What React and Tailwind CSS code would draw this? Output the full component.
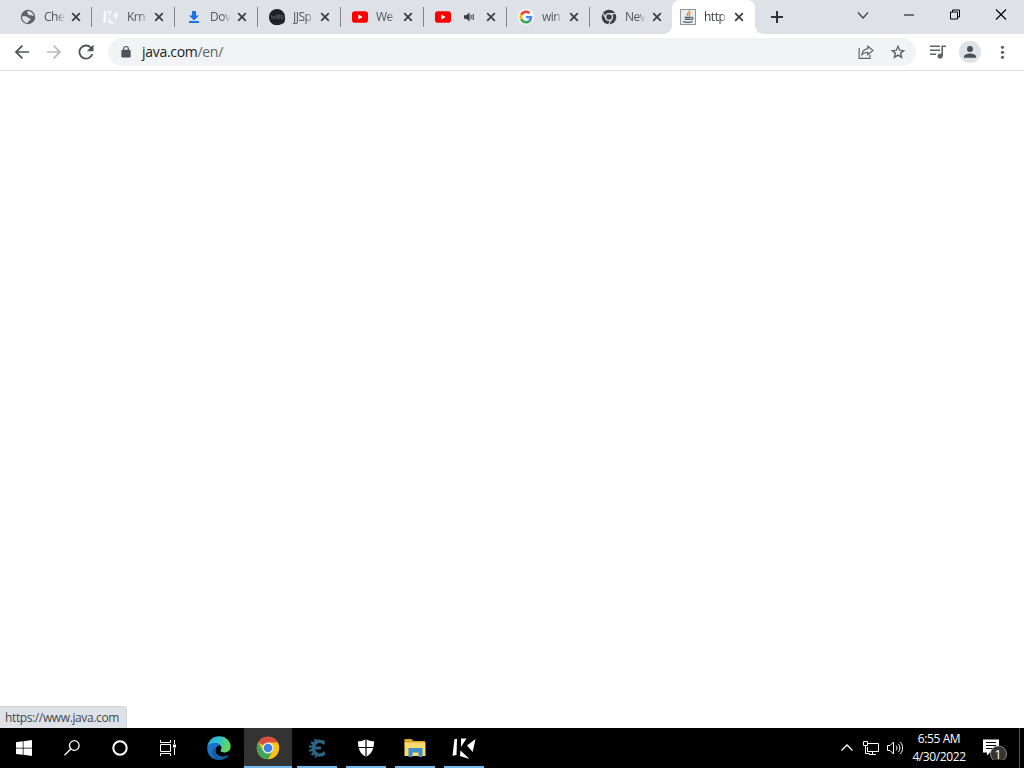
import React from 'react';

const tabs = [
  { icon: 'globe', title: 'Che' },
  { icon: 'krnl', title: 'Krn' },
  { icon: 'download', title: 'Dov' },
  { icon: 'jjs', title: 'JJSp' },
  { icon: 'youtube', title: 'We' },
  { icon: 'youtube', title: '', audio: true },
  { icon: 'google', title: 'win' },
  { icon: 'chromeDark', title: 'Nev' },
  { icon: 'java', title: 'http', active: true },
];

function YouTube() {
  return (
    <svg className="size-4" viewBox="0 0 16 16">
      <rect x="0" y="2.3" width="16" height="11.4" rx="2.8" fill="#f00" />
      <path d="M6.4 5.6v4.8l4.2-2.4z" fill="#fff" />
    </svg>
  );
}

function Favicon({ name }) {
  if (name === 'youtube') return <YouTube />;
  if (name === 'globe') {
    return (
      <svg className="size-4" viewBox="0 0 16 16">
        <circle cx="8" cy="8" r="7.2" fill="#5f6368" />
        <path d="M2 7.500c3-.3 5-.2 5.800 1 .7 1 2.700.3 2.700 1.700s-2 1.300-2.300 2.300c-.2.700 0 1.300-.5 1.400C4.500 13.900 2 11 2 7.500z M7.500 2.300c-.8 1-.3 1.700.6 1.900-.3 1.200.5 2.200 2 2 1.300-.2 2.200.800 3.700.5C13.400 4.500 11 1.800 7.500 2.300z" fill="#dee1e6" />
      </svg>
    );
  }
  if (name === 'krnl') {
    return (
      <svg className="size-4" viewBox="0 0 24 24" fill="#f8f9fa">
        <path d="M1.500 3.500H5L4.500 20l-4.200.5zM8.500 2.500H14L8.500 11zM15 9.500L23 3l-2.500 13zM8 14l10 9-10-2z" />
      </svg>
    );
  }
  if (name === 'download') {
    return (
      <svg className="size-4" viewBox="0 0 16 16" fill="#1a73e8">
        <path d="M6 2h4v4.500h3L8 11.500 3 6.500h3zM3 12h10v2H3z" />
      </svg>
    );
  }
  if (name === 'jjs') {
    return (
      <svg className="size-4" viewBox="0 0 16 16">
        <path d="M0 8a8 8 0 1 1 16 0v3l-1 3-3 1.200A8 8 0 0 1 0 8z" fill="#202124" />
        <path d="M2 6l1.500 4L5 7l1.500 3L7 6M8.500 10V6h2v2h-2l2.500 2M12 6v4l2-1V7z" fill="none" stroke="#5c6064" strokeWidth=".8" />
      </svg>
    );
  }
  if (name === 'google') {
    return (
      <svg className="size-4" viewBox="0 0 48 48">
        <circle cx="24" cy="24" r="24" fill="#f5f6f8" />
        <g transform="translate(4.500 4.500) scale(.81)">
          <path fill="#EA4335" d="M24 9.500c3.540 0 6.710 1.220 9.210 3.600l6.850-6.850C35.900 2.380 30.470 0 24 0 14.620 0 6.510 5.380 2.560 13.220l7.980 6.190C12.430 13.720 17.740 9.500 24 9.500z" />
          <path fill="#4285F4" d="M46.980 24.550c0-1.570-.15-3.090-.38-4.550H24v9.020h12.940c-.58 2.960-2.260 5.480-4.780 7.180l7.730 6c4.510-4.180 7.090-10.360 7.090-17.650z" />
          <path fill="#FBBC05" d="M10.530 28.590A14.500 14.500 0 0 1 10.530 19.410l-7.980-6.190a24 24 0 0 0 0 21.560z" />
          <path fill="#34A853" d="M24 48c6.480 0 11.930-2.130 15.890-5.810l-7.730-6c-2.150 1.450-4.920 2.300-8.160 2.300-6.260 0-11.570-4.220-13.470-9.910l-7.980 6.190C6.510 42.620 14.620 48 24 48z" />
        </g>
      </svg>
    );
  }
  if (name === 'chromeDark') {
    return (
      <svg className="size-4" viewBox="0 0 16 16">
        <circle cx="8" cy="8" r="7.300" fill="#3c4043" />
        <circle cx="8" cy="8" r="3.400" fill="none" stroke="#dee1e6" strokeWidth="1.300" />
        <path d="M8 4.600h6.400M5.100 9.700L1.900 4.200M10.900 9.700l-3.200 5.500" stroke="#dee1e6" strokeWidth="1.200" />
      </svg>
    );
  }
  return (
    <svg className="size-4" viewBox="0 0 16 16">
      <rect x=".5" y=".5" width="15" height="15" fill="#e8ecec" stroke="#8d9899" />
      <path d="M9.500 1.500c.5 2-3.500 2.800-2 5.300M10.800 4c-2.500 1-.8 2-2 3.300" fill="none" stroke="#e07b1c" strokeWidth="1.200" />
      <path d="M4.500 8.500h6.500M5 10.300h5.500M3 12.500c2 1.200 7.500 1.200 9.500 0M11.500 8.200c2 0 1.500 2-.5 2.500" fill="none" stroke="#4b6270" strokeWidth="1.300" />
    </svg>
  );
}

function Close() {
  return (
    <svg className="size-4 shrink-0" viewBox="0 0 16 16" stroke="#3c4043" strokeWidth="1.800">
      <path d="M4.200 4.200l7.600 7.600M11.800 4.200l-7.600 7.600" />
    </svg>
  );
}

function Tab({ icon, title, audio, active }) {
  return (
    <div className={active ? 'relative flex h-[34px] w-[83px] items-center rounded-t-lg bg-white pl-2' : 'relative flex h-[34px] w-[83px] items-center pl-3'}>
      <div className="size-4 shrink-0"><Favicon name={icon} /></div>
      <div className={active
        ? 'ml-2 flex h-4 w-[23px] shrink-0 items-center whitespace-nowrap text-xs tracking-[-0.5px] text-[#3c4043] mask-r-from-75% mask-r-to-100%'
        : 'ml-2 flex h-4 w-5 shrink-0 items-center whitespace-nowrap text-xs tracking-[-0.5px] text-[#54585d] mask-r-from-65% mask-r-to-105%'}
      >
        {title}
      </div>
      {audio && (
        <svg className="absolute left-[41px] top-[11px] size-3" viewBox="0 0 12 12">
          <path d="M0 4.200h2.200L5.500 1.500v9L2.200 7.800H0z" fill="#3c4043" />
          <path d="M7 3.800v4.400M9.200 3v6" fill="none" stroke="#3c4043" strokeWidth="1.100" />
        </svg>
      )}
      <div className="ml-1"><Close /></div>
      {active ? (
        <>
          <span className="absolute -left-2 bottom-0 size-2 bg-[radial-gradient(circle_at_0_0,transparent_7.500px,#fff_8px)]" />
          <span className="absolute -right-2 bottom-0 size-2 bg-[radial-gradient(circle_at_100%_0,transparent_7.500px,#fff_8px)]" />
        </>
      ) : (
        icon !== 'chromeDark' && <span className="absolute -right-px top-[7px] h-5 w-px bg-[#80868b]" />
      )}
    </div>
  );
}

function TabStrip() {
  return (
    <div className="flex h-[34px] bg-[#dee1e6] pl-2">
      {tabs.map((tab, i) => <Tab key={i} {...tab} />)}
      <svg className="ml-[14px] mt-[9px] size-4" viewBox="0 0 16 16" stroke="#303337" strokeWidth="2">
        <path d="M8 2v12M2 8h12" />
      </svg>
      {/* window buttons */}
      <div className="ml-auto flex h-[29px] items-center">
        <svg className="h-7 w-[46px]" viewBox="0 0 46 28" fill="none" stroke="#3c4043" strokeWidth="1.200">
          <path d="M18 11.500l5 5.500 5-5.500" />
        </svg>
        <svg className="h-7 w-[46px]" viewBox="0 0 46 28" stroke="#000">
          <path d="M18 14h10" />
        </svg>
        <svg className="h-7 w-[46px]" viewBox="0 0 46 28" fill="none" stroke="#000">
          <path d="M18.500 11h7v7h-7zM20.500 11V9h7v7h-2" />
        </svg>
        <svg className="h-7 w-[46px]" viewBox="0 0 46 28" fill="none" stroke="#000" strokeWidth="1.100">
          <path d="M18 8.500l10 10M28 8.500l-10 10" />
        </svg>
      </div>
    </div>
  );
}

function Toolbar() {
  return (
    <div className="flex h-[37px] items-center border-b border-[#dadce0] bg-white pl-3">
      <svg className="size-5" viewBox="0 0 24 24" fill="#4f5358">
        <path d="M20.500 11H7.300l5.900-5.900L11.700 3.600 3.300 12l8.400 8.400 1.500-1.500L7.300 13h13.200z" />
      </svg>
      <svg className="ml-3 size-5" viewBox="0 0 24 24" fill="#b9bbbe">
        <path d="M3.500 11h13.200l-5.900-5.900 1.500-1.500 8.400 8.400-8.400 8.400-1.500-1.500 5.900-5.900H3.500z" />
      </svg>
      <svg className="ml-3 size-5" viewBox="0 0 24 24" fill="#4f5358">
        <path d="M18.400 5.600A9 9 0 1 0 20.700 14.500h-2.300A6.800 6.800 0 1 1 16.800 7.200L13 11h8V3z" />
      </svg>
      <div className="ml-3 flex h-7 w-[808px] items-center rounded-full bg-[#f1f3f4] pl-[11px] pr-[10px]">
        <svg className="size-[14px]" viewBox="0 0 24 24" fill="#4f5358">
          <path d="M18 8h-1V6.500a5 5 0 0 0-10 0V8H6a2 2 0 0 0-2 2v9.500a2 2 0 0 0 2 2h12a2 2 0 0 0 2-2V10a2 2 0 0 0-2-2zM9 8V6.500a3 3 0 0 1 6 0V8z" />
        </svg>
        <span className="ml-[9px] text-sm leading-5 tracking-[-0.3px] text-[#202124]">
          java.com<span className="text-[#5f6368]">/en/</span>
        </span>
        <svg className="ml-auto size-4" viewBox="0 0 16 16" fill="none" stroke="#5f6368" strokeWidth="1.200">
          <path d="M1.100 4v10.400H12V11" />
          <path d="M9.800 2.200l5.200 4.300-5.200 4.300V8.300C7 8.200 5.200 9 3.900 10.700c.4-3.300 2.300-5.600 5.900-6z" />
        </svg>
        <svg className="ml-4 size-4" viewBox="0 0 24 24" fill="#5f6368">
          <path d="M23 9.200l-7.700-.7L12 1.300 8.700 8.500 1 9.200l5.800 5.100L5.100 22 12 17.900 18.900 22l-1.700-7.700zM12 15.300l-3.800 2.300 1-4.300L5.900 10.400l4.400-.4L12 6l1.700 4 4.400.4-3.300 2.900 1 4.300z" />
        </svg>
      </div>
      <svg className="ml-3 size-5" viewBox="0 0 20 20" fill="none" stroke="#5f6368" strokeWidth="1.600">
        <path d="M2 4.300h10M2 8.300h10M2 12.300h6M14.200 14V4.300H18" />
        <circle cx="12.200" cy="14" r="1.800" fill="#5f6368" />
      </svg>
      <svg className="ml-[11px] size-[22px]" viewBox="0 0 22 22">
        <circle cx="11" cy="11" r="11" fill="#dee1e6" />
        <circle cx="11" cy="8" r="3" fill="#4b4f55" />
        <path d="M5 16.800v-1.300c0-2 4-3 6-3s6 1 6 3v1.300z" fill="#4b4f55" />
      </svg>
      <svg className="ml-[14px] size-4" viewBox="0 0 16 16" fill="#5f6368">
        <circle cx="7.500" cy="3.300" r="1.600" />
        <circle cx="7.500" cy="8.300" r="1.600" />
        <circle cx="7.500" cy="13.300" r="1.600" />
      </svg>
    </div>
  );
}

function Chrome() {
  return (
    <svg className="size-6" viewBox="0 0 24 24">
      <circle cx="12" cy="12" r="11.200" fill="#fbc116" />
      <path d="M12 12L2.300 6.400A11.200 11.200 0 0 1 21.700 6.400H12z" fill="#dd4b3e" />
      <path d="M2.300 6.400A11.200 11.200 0 0 0 12 23.200l4.800-8.400L12 17l-4.800-2.200z" fill="#3fa659" />
      <circle cx="12" cy="12" r="5.500" fill="#f1f3f4" />
      <circle cx="12" cy="12" r="4.300" fill="#3e82e6" />
    </svg>
  );
}

function Edge() {
  return (
    <svg className="ml-0.5 size-6" viewBox="0 0 24 24">
      <defs>
        <linearGradient id="edgeTop" x1="0" y1="0" x2="1" y2=".3">
          <stop offset="0" stopColor="#2aa5e4" />
          <stop offset=".5" stopColor="#31c1d0" />
          <stop offset="1" stopColor="#63d957" />
        </linearGradient>
      </defs>
      <path d="M.3 11C.8 4.800 5.800.2 12 .2c7 0 11.700 5 11.700 10.300 0 3.800-3 6-6 6-2.600 0-4.200-1-4.200-2 0-.8 1-1 1-2.800 0-2.300-2.400-4.300-5.500-4.300C5 7.400 1.500 8.500.3 11z" fill="url(#edgeTop)" />
      <path d="M.3 11.500C1 8.700 4.200 6.900 8 6.900c3 0 5.200 1.100 6.200 2.900C11 8.500 8.500 11 8.500 14c0 4.500 4 7 8 6.500 2.500-.2 4-1 5.500-1.900-2 3.400-5.700 5.300-9.700 5.300C5.300 23.900-.4 18.500.3 11.500z" fill="#1874c6" />
      <path d="M8.500 14c-.8 5.500 5 9.300 11 6.800-3 3.300-8 3.800-11.500 2.100C4 19.500 4.500 12 9.800 10.600 9 11.600 8.600 12.700 8.500 14z" fill="#155a9f" />
    </svg>
  );
}

function CheatEngine() {
  return (
    <svg className="size-6" viewBox="0 0 24 24" fill="none" stroke="#2c6687">
      <path d="M18.500 7C16 4.500 12 4.500 9.800 7.200c-2.200 2.800-2 7.500.2 10 2.500 2.500 6 2.300 8.500.3M9 12h7" strokeWidth="3.200" />
      <path d="M18.800 4.500v4M19 15.500v4" strokeWidth="1.800" />
      <path d="M12 5.500a7 7 0 0 0 0 13.500" strokeWidth="6" strokeDasharray="1.800 1.500" />
    </svg>
  );
}

function Shield() {
  return (
    <svg className="size-5" viewBox="0 0 20 20">
      <path d="M10 1c2 1.500 5 2.300 8 2.300 0 7-1.500 12-8 15.700C3.500 15.300 2 10.300 2 3.300 5 3.300 8 2.500 10 1z" fill="#fff" />
      <path d="M10 1v18M2 9.500h16" stroke="#000" strokeWidth="1.200" />
    </svg>
  );
}

function Folder() {
  return (
    <svg className="size-6" viewBox="0 0 24 24">
      <path d="M1.500 3h7l2 2H22v4H1.500z" fill="#dba52d" />
      <path d="M1.500 6.500h21V20h-21z" fill="#fadb72" />
      <path d="M5.500 21v-9h14v9h-4v-4.500h-6V21z" fill="#3d8fc6" />
    </svg>
  );
}

function Krnl() {
  return (
    <svg className="size-6" viewBox="0 0 24 24" fill="#fff">
      <path d="M2.500 3H5L4.500 19l-4 .8zM9 2.500h5.500L9 11zM15 9.500L23.500 3l-2.800 13zM8.500 14.500L17.500 23 8 20z" />
    </svg>
  );
}

function Taskbar() {
  return (
    <div className="flex h-10 bg-black text-white">
      <div className="flex h-10 w-12 items-center justify-center">
        <svg className="size-4" viewBox="0 0 16 16" fill="#fff">
          <path d="M0 2.200L6.800 1.300v6.400H0zM7.500 1.200L16 0v7.700H7.500zM0 8.400h6.800v6.400L0 13.900zM7.500 8.400H16V16l-8.500-1.200z" />
        </svg>
      </div>
      <div className="flex h-10 w-12 items-center justify-center">
        <svg className="size-4" viewBox="0 0 16 16" fill="none" stroke="#fff" strokeWidth="1.300">
          <circle cx="10.300" cy="5.500" r="4.800" />
          <path d="M6.800 9L.5 15.300" />
        </svg>
      </div>
      <div className="flex h-10 w-12 items-center justify-center">
        <svg className="size-4" viewBox="0 0 16 16" fill="none" stroke="#fff" strokeWidth="2">
          <circle cx="8" cy="8" r="6.700" />
        </svg>
      </div>
      <div className="flex h-10 w-12 items-center justify-center">
        <svg className="size-4" viewBox="0 0 16 16" fill="none" stroke="#fff">
          <path d="M.5 0v2.500h10V0M.5 16v-2.500h10V16M.5 4.500h10v7H.5zM14.500 0v4M14.500 8v7" />
          <path d="M13 4.500h3v3h-3z" fill="#fff" stroke="none" />
        </svg>
      </div>
      <div className="flex h-10 w-[52px] items-center justify-center"><Edge /></div>
      <div className="flex h-10 w-12 flex-col items-center border-b-2 border-[#76b9ed] bg-[#333] pt-2"><Chrome /></div>
      <div className="ml-[5px] flex h-10 w-10 flex-col items-center border-b-2 border-[#76b9ed] pt-2"><CheatEngine /></div>
      <div className="ml-[9px] flex h-10 w-10 flex-col items-center border-b-2 border-[#76b9ed] pt-[10px]"><Shield /></div>
      <div className="ml-[9px] flex h-10 w-10 flex-col items-center border-b-2 border-[#76b9ed] pt-2"><Folder /></div>
      <div className="ml-[9px] flex h-10 w-10 flex-col items-center border-b-2 border-[#76b9ed] pt-2"><Krnl /></div>

      {/* tray */}
      <div className="ml-auto flex items-center">
        <svg className="size-3" viewBox="0 0 12 12" fill="none" stroke="#fff" strokeWidth="1.300">
          <path d="M.5 8.500L6 3l5.500 5.500" />
        </svg>
        <svg className="ml-[10px] size-4" viewBox="0 0 16 16" fill="none" stroke="#fff">
          <path d="M5 3.500h10.500v8H4.500V7M.5 1.500h4v4h-4zM2.500 5.500v8h4M9.500 11.500v3M6 14.500h7" />
        </svg>
        <svg className="ml-2 size-4" viewBox="0 0 16 16" fill="none" stroke="#fff">
          <path d="M.5 5.500H3L6.500 2v12L3 10.500H.5zM9 5.500c1.300 1.500 1.300 3.500 0 5M11.200 3.800c2.200 2.500 2.200 5.900 0 8.400M13.300 2c3 3.500 3 8.500 0 12" />
        </svg>
        <div className="ml-2 flex w-[56px] flex-col items-center whitespace-nowrap text-xs leading-[18px] tracking-[-0.4px]">
          <span>6:55 AM</span>
          <span>4/30/2022</span>
        </div>
        <div className="relative ml-4 mr-[12px] h-6 w-6">
          <svg className="size-6" viewBox="0 0 24 24">
            <path d="M0 3.500h16v13H7l-3 3v-3H0z" fill="#fff" />
            <path d="M3 6.500h10M3 9.500h10M3 12.500h7" stroke="#000" />
            <circle cx="15.500" cy="18" r="8" fill="#333" stroke="#888" strokeWidth="1" />
          </svg>
          <span className="absolute left-[11px] top-[10px] w-2 text-center text-[13px] leading-4">1</span>
        </div>
        <div className="mr-1 h-10 w-px bg-[#555]" />
      </div>
    </div>
  );
}

export default function App() {
  return (
    <div className="flex h-[768px] w-[1024px] flex-col overflow-hidden bg-white font-['Open_Sans','Noto_Sans',sans-serif]">
      <TabStrip />
      <Toolbar />
      <main className="flex flex-1 items-end bg-white">
        <div className="flex h-[22px] w-[127px] items-center rounded-tr border-r border-t border-[#d0d3d8] bg-[#dee1e6] pl-[5px] text-xs tracking-[-0.38px] text-[#45494d]">
          https://www.java.com
        </div>
      </main>
      <Taskbar />
    </div>
  );
}
